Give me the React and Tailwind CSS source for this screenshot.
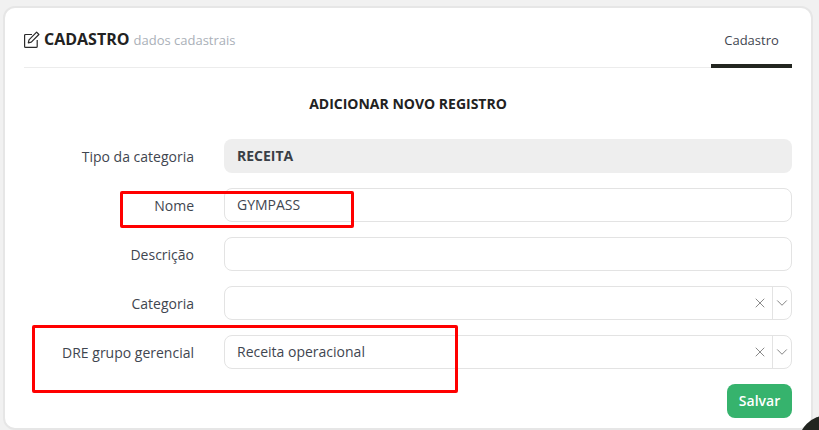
import { X, ChevronDown } from 'lucide-react';

const labelCls = 'w-[170px] shrink-0 pt-px text-right text-sm text-[#3f4650]';

function SelectField({ value }) {
  return (
    <div className="flex-1 h-[34px] flex items-center rounded-lg border border-[#e3e3e3] bg-white text-sm text-[#3f4650]">
      <span className="flex-1 pl-3">{value}</span>
      <X className="w-4 h-4 mr-[4px] text-[#777]" strokeWidth={1.3} />
      <div className="w-[19px] h-full flex items-center justify-center border-l border-[#e3e3e3]">
        <ChevronDown className="w-[18px] h-[18px] text-[#777]" strokeWidth={1.2} />
      </div>
    </div>
  );
}

export default function App() {
  return (
    <div className="relative w-[819px] h-[430px] overflow-hidden bg-[#f1f1f1] pl-[3px] pr-[6px] pt-[6px] font-['Open_Sans',sans-serif]">
      <div className="h-[424px] rounded-xl border-2 border-[#e6e6e6] bg-white px-[19px]">
        {/* Header */}
        <div className="h-[60px] flex items-end justify-between border-b border-[#ececec]">
          <div className="flex items-center h-[56px]">
            <svg className="w-[16px] h-[17px] mr-[4px] text-[#2a2a2a]" viewBox="0 0 16 17" fill="none" stroke="currentColor" strokeWidth="1.2">
              <path d="M8 3.5H1.6a1 1 0 0 0-1 1v10.9a1 1 0 0 0 1 1h10.6a1 1 0 0 0 1-1V9" />
              <path d="M12.6 1.2l2.3 2.3-7.6 7.6-3 .7.7-3z" strokeLinejoin="round" />
            </svg>
            <span className="text-base font-bold text-[#222]">CADASTRO</span>
            <span className="ml-[4px] pt-[3px] text-[13px] text-[#aab0b8]">dados cadastrais</span>
          </div>
          <div className="w-[81px] h-[46px] -mb-px flex items-start justify-center pt-[9px] border-b-4 border-[#222520] text-[13px] text-[#3f4650]">
            Cadastro
          </div>
        </div>

        <h2 className="mt-[26px] text-center text-sm leading-[20px] font-bold text-[#222]">ADICIONAR NOVO REGISTRO</h2>

        {/* Form */}
        <div className="mt-[25px] flex flex-col gap-[15px]">
          <div className="flex items-center gap-[30px]">
            <label className={labelCls}>Tipo da categoria</label>
            <div className="flex-1 h-[34px] flex items-center rounded-lg bg-[#eeeeee] pl-[13px] text-sm font-bold text-[#3a3f46]">RECEITA</div>
          </div>
          <div className="flex items-center gap-[30px]">
            <label className={labelCls}>Nome</label>
            <div className="flex-1 h-[34px] flex items-center rounded-lg border border-[#e3e3e3] pl-3 text-sm text-[#3f4650]">GYMPASS</div>
          </div>
          <div className="flex items-center gap-[30px]">
            <label className={labelCls}>Descrição</label>
            <div className="flex-1 h-[34px] rounded-lg border border-[#e3e3e3]" />
          </div>
          <div className="flex items-center gap-[30px]">
            <label className={labelCls}>Categoria</label>
            <SelectField />
          </div>
          <div className="flex items-center gap-[30px]">
            <label className={labelCls}>DRE grupo gerencial</label>
            <SelectField value="Receita operacional" />
          </div>
          <div className="flex justify-end">
            <button className="w-[65px] h-[34px] rounded-lg bg-[#36b36d] text-sm font-semibold text-white">Salvar</button>
          </div>
        </div>
      </div>

      {/* Red annotation boxes */}
      <div className="absolute left-[120px] top-[191px] w-[234px] h-[37px] border-[3px] border-[#ff0000] rounded-[2px]" />
      <div className="absolute left-[32px] top-[325px] w-[426px] h-[68px] border-[3px] border-[#ff0000] rounded-[2px]" />

      {/* Floating button cut off by the corner */}
      <div className="absolute left-[798px] top-[415px] w-[60px] h-[60px] rounded-full bg-[#222520]" />
    </div>
  );
}
